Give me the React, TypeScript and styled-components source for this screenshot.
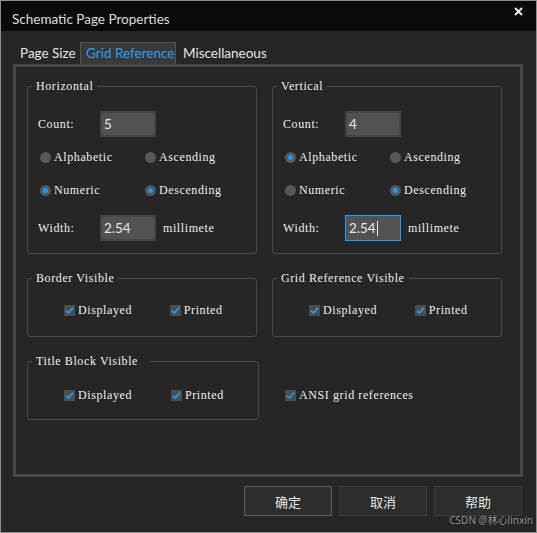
import styled, { createGlobalStyle } from "styled-components";

const GlobalStyle = createGlobalStyle`
  html, body {
    margin: 0;
    padding: 0;
    background: #262626;
  }
  * {
    box-sizing: border-box;
  }
`;

const BLUE = "#1a9cff";
const UI_FONT = `Lato, "Noto Sans", "Noto Sans CJK SC", sans-serif`;
const FORM_FONT = `"Liberation Serif", "Noto Sans CJK SC", serif`;

const Window = styled.div`
  position: relative;
  width: 537px;
  height: 533px;
  border: 1px solid #8e8e8e;
  background: #262626;
  display: flex;
  flex-direction: column;
  font-family: ${UI_FONT};
`;

const TitleBar = styled.div`
  height: 30px;
  background: #0a0a0a;
  display: flex;
  align-items: center;
  justify-content: space-between;
  padding: 6px 13px 0 11px;
`;

const Title = styled.div`
  color: #dedede;
  font-size: 13.5px;
`;

const Close = styled.div`
  width: 9px;
  height: 9px;
  margin-bottom: 16px;
  display: flex;
`;

const Body = styled.div`
  flex: 1;
  padding: 11px 13px 0 12px;
  display: flex;
  flex-direction: column;
`;

const TabStrip = styled.div`
  display: flex;
  align-items: flex-end;
  height: 22px;
`;

const Tab = styled.div<{ $active?: boolean; $w: number }>`
  width: ${(p) => p.$w}px;
  height: 22px;
  padding: 0 0 1px ${(p) => (p.$active ? 5 : 6)}px;
  display: flex;
  align-items: center;
  white-space: nowrap;
  font-size: 13.5px;
  color: ${(p) => (p.$active ? "#2a9df4" : "#e4e4e4")};
  background: ${(p) => (p.$active ? "#3a3a3a" : "transparent")};
  border: 1px solid ${(p) => (p.$active ? "#555" : "transparent")};
  border-bottom: none;
`;

const Panel = styled.div`
  height: 413px;
  border: 3px solid #464646;
  padding: 13px 0 0 11px;
`;

const GroupGrid = styled.div`
  display: grid;
  grid-template-columns: 230px 230px;
  column-gap: 15px;
  row-gap: 18px;
  align-items: start;
`;

const Fieldset = styled.fieldset<{ $h: number; $w?: number }>`
  margin: 0;
  min-width: 0;
  width: ${(p) => p.$w ?? 230}px;
  height: ${(p) => p.$h}px;
  border: 1px solid #4a4a4a;
  border-radius: 3px;
  padding: 0 10px;
`;

const formText = `
  font-family: ${FORM_FONT};
  font-size: 12px;
  letter-spacing: 0.6px;
  color: #ededed;
  white-space: nowrap;
`;

const Legend = styled.legend<{ $extra?: number }>`
  margin-left: -6px;
  padding: 0 ${(p) => 4 + (p.$extra ?? 0)}px 0 4px;
  height: 13px;
  line-height: 13px;
  ${formText}
`;

const Row = styled.div<{ $top: number; $h: number; $pad?: number }>`
  display: flex;
  align-items: center;
  margin-top: ${(p) => p.$top}px;
  height: ${(p) => p.$h}px;
  padding-left: ${(p) => p.$pad ?? 0}px;
`;

const Label = styled.div`
  width: 62px;
  ${formText}
`;

const Unit = styled(Label)`
  width: auto;
  margin-left: 7px;
`;

const Field = styled.div<{ $focused?: boolean }>`
  width: 56px;
  height: 26px;
  display: flex;
  align-items: center;
  background: #525252;
  border: ${(p) => (p.$focused ? `1px solid ${BLUE}` : "2px solid #454545")};
  padding-left: ${(p) => (p.$focused ? 3 : 2)}px;
  font-family: ${UI_FONT};
  font-size: 13.5px;
  color: #e8e8e8;
`;

const Caret = styled.span`
  display: inline-block;
  width: 1px;
  height: 15px;
  margin-left: 1px;
  background: #e8e8e8;
`;

const Option = styled.div<{ $w: number }>`
  width: ${(p) => p.$w}px;
  display: flex;
  align-items: center;
  gap: 3px;
  ${formText}
`;

const RadioDot = styled.span<{ $on?: boolean }>`
  width: 11px;
  height: 11px;
  flex: none;
  border-radius: 50%;
  background: #575757;
  display: flex;
  align-items: center;
  justify-content: center;
  &::after {
    content: "";
    display: ${(p) => (p.$on ? "block" : "none")};
    width: 5px;
    height: 5px;
    border-radius: 50%;
    background: ${BLUE};
  }
`;

const CheckBox = styled.span`
  width: 11px;
  height: 11px;
  flex: none;
  background: #4d4d4d;
  display: flex;
  align-items: center;
  justify-content: center;
`;

const FreeCell = styled.div`
  padding: 33px 0 0 13px;
`;

const ButtonRow = styled.div`
  display: flex;
  justify-content: flex-end;
  gap: 7px;
  margin-top: 9px;
  padding-right: 1px;
`;

const Button = styled.button<{ $default?: boolean }>`
  width: 88px;
  height: 30px;
  background: #2d2d2d;
  border: 1px solid ${(p) => (p.$default ? "#5e5e5e" : "#3c3c3c")};
  color: #e6e6e6;
  font-family: "Noto Sans CJK SC", sans-serif;
  font-size: 13px;
  padding: 0;
`;

const Watermark = styled.div`
  position: absolute;
  right: 3px;
  bottom: 5px;
  font-family: "Noto Sans", "Noto Sans CJK SC", sans-serif;
  font-size: 10px;
  color: #9c9c9c;
  text-shadow: 0 0 1px #000;
`;

const Radio = ({ on, label, w }: { on?: boolean; label: string; w: number }) => (
  <Option $w={w}>
    <RadioDot $on={on} />
    {label}
  </Option>
);

const Check = ({ label, w }: { label: string; w: number }) => (
  <Option $w={w}>
    <CheckBox>
      <svg width="9" height="9" viewBox="0 0 9 9">
        <path d="M1 4.6 L3.4 7 L8 1.6" fill="none" stroke={BLUE} strokeWidth="1.7" />
      </svg>
    </CheckBox>
    {label}
  </Option>
);

type AxisProps = {
  title: string;
  count: string;
  alpha: boolean;
  descending: boolean;
  focused?: boolean;
};

const AxisGroup = ({ title, count, alpha, descending, focused }: AxisProps) => (
  <Fieldset $h={174}>
    <Legend>{title}</Legend>
    <Row $top={18} $h={26}>
      <Label>Count:</Label>
      <Field>{count}</Field>
    </Row>
    <Row $top={9} $h={22} $pad={2}>
      <Radio on={alpha} label="Alphabetic" w={105} />
      <Radio on={false} label="Ascending" w={100} />
    </Row>
    <Row $top={11} $h={22} $pad={2}>
      <Radio on={!alpha} label="Numeric" w={105} />
      <Radio on={descending} label="Descending" w={100} />
    </Row>
    <Row $top={14} $h={26}>
      <Label>Width:</Label>
      <Field $focused={focused}>
        2.54
        {focused && <Caret />}
      </Field>
      <Unit>millimete</Unit>
    </Row>
  </Fieldset>
);

const VisibleGroup = ({ title, top, extra }: { title: string; top: number; extra?: number }) => (
  <Fieldset $h={65} $w={extra ? 232 : 230}>
    <Legend $extra={extra}>{title}</Legend>
    <Row $top={top} $h={14} $pad={26}>
      <Check label="Displayed" w={111} />
      <Check label="Printed" w={80} />
    </Row>
  </Fieldset>
);

export default function App() {
  return (
    <>
      <GlobalStyle />
      <Window>
        <TitleBar>
          <Title>Schematic Page Properties</Title>
          <Close>
            <svg width="9" height="9" viewBox="0 0 9 9">
              <path d="M1 1 L8 8 M8 1 L1 8" stroke="#f2f2f2" strokeWidth="1.8" />
            </svg>
          </Close>
        </TitleBar>
        <Body>
          <TabStrip>
            <Tab $w={67}>Page Size</Tab>
            <Tab $w={96} $active>
              Grid Reference
            </Tab>
            <Tab $w={94}>Miscellaneous</Tab>
          </TabStrip>
          <Panel>
            <GroupGrid>
              <AxisGroup title="Horizontal" count="5" alpha={false} descending />
              <AxisGroup title="Vertical" count="4" alpha descending focused />
              <VisibleGroup title="Border Visible" top={18} />
              <VisibleGroup title="Grid Reference Visible" top={18} />
              <VisibleGroup title="Title Block Visible" top={20} extra={8} />
              <FreeCell>
                <Check label="ANSI grid references" w={150} />
              </FreeCell>
            </GroupGrid>
          </Panel>
          <ButtonRow>
            <Button $default>确定</Button>
            <Button>取消</Button>
            <Button>帮助</Button>
          </ButtonRow>
        </Body>
        <Watermark>CSDN @林心linxin</Watermark>
      </Window>
    </>
  );
}
